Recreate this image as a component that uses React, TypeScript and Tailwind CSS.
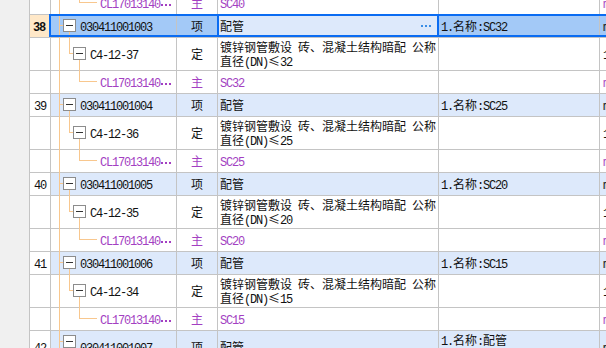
import React from "react";

const GRID = "border-[#c4c4c4]";

function T({ s }: { s: string }) {
  const parts = s.match(/[\x20-\x7E]+|[^\x20-\x7E]+/g) ?? [];
  return (
    <>
      {parts.map((p, i) =>
        /^[\x20-\x7E]/.test(p) ? (
          <span key={i} className="font-['Liberation_Mono'] text-[12px] tracking-[-1.2px] leading-[0px]">
            {p}
          </span>
        ) : (
          <span key={i}>{p}</span>
        )
      )}
    </>
  );
}

function VLine({ left, top, bottom, height }: { left: number; top: number; bottom?: number; height?: number }) {
  return <div className="absolute w-px bg-[#f8c78e]" style={{ left, top, bottom, height }} />;
}
function HLine({ left, top, width }: { left: number; top: number; width: number }) {
  return <div className="absolute h-px bg-[#f8c78e]" style={{ left, top, width }} />;
}
function Box({ left, top }: { left: number; top: number }) {
  return (
    <div
      className="absolute w-[13px] h-[13px] border border-[#8c8c8c] bg-white flex items-center justify-center"
      style={{ left, top }}
    >
      <div className="w-[7px] h-px bg-[#333]" />
    </div>
  );
}

function Dots({ color }: { color: string }) {
  return (
    <span className="inline-flex items-center gap-[2px] ml-[1px] align-middle leading-[0px]">
      <span className={`w-[2px] h-[2px] ${color}`} />
      <span className={`w-[2px] h-[2px] ${color}`} />
      <span className={`w-[2px] h-[2px] ${color}`} />
    </span>
  );
}

type Level = 0 | 1 | 2;

function CodeCell({
  level,
  text,
  purple,
  sel,
  dots,
}: {
  level: Level;
  text: string;
  purple?: boolean;
  sel?: boolean;
  dots?: boolean;
}) {
  const pl = level === 0 ? "pl-[29px]" : level === 1 ? "pl-[39px]" : "pl-[49px]";
  return (
    <div
      className={`relative w-[126px] shrink-0 border-r ${GRID} flex items-center ${pl} ${
        purple ? "text-[#a33fc2]" : ""
      } ${sel ? "bg-[#a3c9f7]" : ""}`}
    >
      <VLine left={8} top={-1} bottom={-1} />
      {level === 0 && (
        <>
          <HLine left={8} top={10} width={5} />
          <VLine left={18} top={16} bottom={-1} />
          <Box left={12} top={4} />
        </>
      )}
      {level === 1 && (
        <>
          <VLine left={18} top={-1} height={17} />
          <HLine left={18} top={15} width={5} />
          <VLine left={28} top={21} bottom={-1} />
          <Box left={22} top={9} />
        </>
      )}
      {level === 2 && (
        <>
          <VLine left={28} top={-1} height={12} />
          <HLine left={28} top={10} width={18} />
        </>
      )}
      <span className="relative whitespace-nowrap">
        <T s={text} />
        {dots && <Dots color="bg-[#a33fc2]" />}
      </span>
    </div>
  );
}

function ItemRow({
  num,
  code,
  feature,
  sel,
  tall,
}: {
  num: number;
  code: string;
  feature: string[];
  sel?: boolean;
  tall?: boolean;
}) {
  return (
    <div className={`flex shrink-0 border-b ${GRID} ${tall ? "h-[33px]" : "h-[23px]"} bg-[#dde9fb]`}>
      <div
        className={`w-[21px] shrink-0 border-r ${GRID} flex items-center ${
          sel ? "bg-[#ffe8c8] pl-[3px] font-bold" : "bg-white pl-[4px]"
        }`}
      >
        <span>
          <T s={String(num)} />
        </span>
      </div>
      <CodeCell level={0} text={code} sel={sel} />
      <div className={`w-[41px] shrink-0 border-r ${GRID} flex items-center justify-center ${sel ? "bg-[#a3c9f7]" : ""}`}>
        项
      </div>
      <div className={`w-[221px] shrink-0 border-r ${GRID} flex items-center pl-[2px]`}>配管</div>
      <div
        className={`w-[161px] shrink-0 border-r ${GRID} flex flex-col justify-center pl-[2px] ${
          sel ? "bg-[#a3c9f7]" : ""
        }`}
      >
        {feature.map((f, i) => (
          <div key={i} className="whitespace-nowrap">
            <T s={f} />
          </div>
        ))}
      </div>
      <div className={`flex-1 overflow-hidden flex items-center pl-[3px] ${sel ? "bg-[#a3c9f7]" : ""}`}>
        <span>
          <T s="m" />
        </span>
      </div>
    </div>
  );
}

function DeRow({ code, dn }: { code: string; dn: string }) {
  return (
    <div className={`flex shrink-0 border-b ${GRID} h-[33px] bg-white`}>
      <div className={`w-[21px] shrink-0 border-r ${GRID}`} />
      <CodeCell level={1} text={code} />
      <div className={`w-[41px] shrink-0 border-r ${GRID} flex items-center justify-center`}>定</div>
      <div className={`w-[221px] shrink-0 border-r ${GRID} flex items-center pl-[2px]`}>
        <div>
          <T s={`镀锌钢管敷设 砖、混凝土结构暗配 公称直径(DN)≤${dn}`} />
        </div>
      </div>
      <div className={`w-[161px] shrink-0 border-r ${GRID}`} />
      <div className="flex-1 overflow-hidden flex items-center pl-[3px]">
        <span>
          <T s="1" />
        </span>
      </div>
    </div>
  );
}

function MatRow({ sc, first }: { sc: string; first?: boolean }) {
  return (
    <div className={`flex shrink-0 border-b ${GRID} h-[23px] bg-white ${first ? "-mt-[8px]" : ""}`}>
      <div className={`w-[21px] shrink-0 border-r ${GRID}`} />
      <CodeCell level={2} text="CL17013140" purple dots />
      <div className={`w-[41px] shrink-0 border-r ${GRID} flex items-center justify-center text-[#a33fc2]`}>主</div>
      <div className={`w-[221px] shrink-0 border-r ${GRID} flex items-center pl-[2px] text-[#a33fc2]`}>
        <span>
          <T s={sc} />
        </span>
      </div>
      <div className={`w-[161px] shrink-0 border-r ${GRID}`} />
      <div className="flex-1 overflow-hidden flex items-center pl-[3px] text-[#a33fc2]">
        <span>
          <T s="m" />
        </span>
      </div>
    </div>
  );
}

const groups = [
  { n: 38, code: "030411001003", de: "C4-12-37", dn: "32", sel: true },
  { n: 39, code: "030411001004", de: "C4-12-36", dn: "25" },
  { n: 40, code: "030411001005", de: "C4-12-35", dn: "20" },
  { n: 41, code: "030411001006", de: "C4-12-34", dn: "15" },
];

export default function App() {
  return (
    <div className="w-[606px] h-[348px] overflow-hidden relative bg-white flex font-['Noto_Sans_CJK_SC',sans-serif] text-[12px] leading-[14px] text-[#111]">
      <div className={`w-[30px] shrink-0 bg-[#f0f0f0] border-r ${GRID}`} />
      <div className="flex-1 flex flex-col min-w-0">
        <MatRow sc="SC40" first />
        {groups.map((g) => (
          <React.Fragment key={g.n}>
            <ItemRow num={g.n} code={g.code} feature={[`1.名称:SC${g.dn}`]} sel={g.sel} />
            <DeRow code={g.de} dn={g.dn} />
            <MatRow sc={`SC${g.dn}`} />
          </React.Fragment>
        ))}
        <ItemRow num={42} code="030411001007" feature={["1.名称:配管", "2.材质:镀锌钢管"]} tall />
      </div>
      {/* selection overlays */}
      <div className="absolute left-[49px] top-[14px] h-[23px] w-[600px] border-2 border-[#0a6cf2] pointer-events-none" />
      <div className="absolute left-[217px] top-[14px] h-[23px] w-[222px] border-2 border-[#0a6cf2] pointer-events-none" />
      <div className="absolute left-[421px] top-[25px] flex gap-[2px]">
        <div className="w-[2px] h-[2px] bg-[#3a8ee6]" />
        <div className="w-[2px] h-[2px] bg-[#3a8ee6]" />
        <div className="w-[2px] h-[2px] bg-[#3a8ee6]" />
      </div>
    </div>
  );
}
